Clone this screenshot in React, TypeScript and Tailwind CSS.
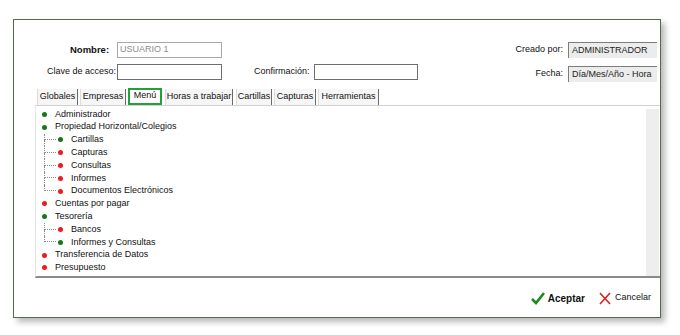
type Node = { t: string; ok: boolean; children?: Node[] };

const tree: Node[] = [
  { t: 'Administrador', ok: true },
  {
    t: 'Propiedad Horizontal/Colegios',
    ok: true,
    children: [
      { t: 'Cartillas', ok: true },
      { t: 'Capturas', ok: false },
      { t: 'Consultas', ok: false },
      { t: 'Informes', ok: false },
      { t: 'Documentos Electrónicos', ok: false },
    ],
  },
  { t: 'Cuentas por pagar', ok: false },
  {
    t: 'Tesorería',
    ok: true,
    children: [
      { t: 'Bancos', ok: false },
      { t: 'Informes y Consultas', ok: true },
    ],
  },
  { t: 'Transferencia de Datos', ok: false },
  { t: 'Presupuesto', ok: false },
];

const tabs = [
  { t: 'Globales', w: 'w-[41px]', mr: 'mr-[2px]' },
  { t: 'Empresas', w: 'w-[46px]', mr: 'mr-[2px]' },
  { t: 'Menú', w: 'w-[34px]', mr: 'mr-[3px]', active: true },
  { t: 'Horas a trabajar', w: 'w-[68px]', mr: 'mr-[3px]' },
  { t: 'Cartillas', w: 'w-[36px]', mr: 'mr-[2px]' },
  { t: 'Capturas', w: 'w-[42px]', mr: 'mr-[2px]' },
  { t: 'Herramientas', w: 'w-[61px]', mr: 'mr-0' },
];

function Dot({ ok }: { ok: boolean }) {
  return <span className={`w-[5px] h-[5px] rounded-full shrink-0 ${ok ? 'bg-[#17761c]' : 'bg-[#ee1c1c]'}`} />;
}

function Row({ node }: { node: Node }) {
  return (
    <>
      <div className="flex items-center h-[12.8px] pl-[6px]">
        <Dot ok={node.ok} />
        <span className="ml-[8px] whitespace-nowrap">{node.t}</span>
      </div>
      {node.children?.map((c, i) => {
        const last = i === node.children!.length - 1;
        return (
          <div key={c.t} className="flex items-center h-[12.8px] pl-[8px]">
            <div className="flex flex-col w-[12px] h-full shrink-0">
              <div className="h-1/2 border-l border-b border-dotted border-[#8a8a8a]" />
              <div className={`h-1/2 ${last ? '' : 'border-l border-dotted border-[#8a8a8a]'}`} />
            </div>
            <span className="ml-[2px] flex">
              <Dot ok={c.ok} />
            </span>
            <span className="ml-[8px] whitespace-nowrap">{c.t}</span>
          </div>
        );
      })}
    </>
  );
}

export default function App() {
  return (
    <div
      className="w-[680px] h-[335px] bg-white pt-[19px] pl-[13px] text-[9px] text-[#111]"
      style={{ fontFamily: '"Liberation Sans", Arial, sans-serif' }}
    >
      <div className="w-[648px] h-[299px] border border-[#566b4d] bg-white shadow-[4px_4px_6px_rgba(0,0,0,0.28)] flex flex-col">
        {/* Nombre / Creado por */}
        <div className="flex items-center h-[16px] mt-[22px] pl-[56px] pr-[3px]">
          <span className="font-bold text-[9.5px]">Nombre:</span>
          <div className="ml-[8px] w-[105px] h-[16px] border border-[#a9a9a9] text-[#8c8c8c] flex items-center pl-[2px]">
            USUARIO 1
          </div>
          <div className="flex-1" />
          <span>Creado por:</span>
          <div className="ml-[5px] w-[89px] h-[16px] bg-[#ececec] border-t border-l border-[#7c7c7c] flex items-center pl-[3px] text-[#222]">
            ADMINISTRADOR
          </div>
        </div>

        {/* Clave / Confirmación / Fecha */}
        <div className="flex items-start h-[18px] mt-[6px] pl-[33px] pr-[3px]">
          <span className="h-[16px] flex items-center">Clave de acceso:</span>
          <div className="ml-[1px] w-[105px] h-[16px] border border-[#6e6e6e]" />
          <span className="ml-[32px] h-[16px] flex items-center">Confirmación:</span>
          <div className="ml-[4px] w-[104px] h-[16px] border border-[#6e6e6e]" />
          <div className="flex-1" />
          <span className="mt-[2px] h-[16px] flex items-center">Fecha:</span>
          <div className="ml-[5px] mt-[2px] w-[89px] h-[16px] bg-[#ececec] border-t border-l border-[#7c7c7c] flex items-center pl-[3px] text-[#222]">
            Día/Mes/Año - Hora
          </div>
        </div>

        {/* Tabs */}
        <div className="flex items-end h-[17px] mt-[6px] ml-[23px]">
          {tabs.map((tb) =>
            tb.active ? (
              <div
                key={tb.t}
                className={`${tb.w} ${tb.mr} h-[17px] border-2 border-[#22a03a] bg-white flex items-center justify-center pb-[2px]`}
              >
                {tb.t}
              </div>
            ) : (
              <div
                key={tb.t}
                className={`${tb.w} ${tb.mr} h-[16px] bg-[#f6f6f6] border-l border-[#dcdcdc] border-r border-r-[#6a6a6a] flex items-center justify-center`}
              >
                {tb.t}
              </div>
            ),
          )}
        </div>

        {/* Panel */}
        <div className="flex ml-[21px] h-[173px] border-t border-[#d2d2d2] border-l border-l-[#e6e6e6] border-b-2 border-b-[#8a8a8a]">
          <div className="flex-1 flex flex-col pt-[2px]">
            {tree.map((n) => (
              <Row key={n.t} node={n} />
            ))}
          </div>
          <div className="w-[13px] mt-[3px] mr-[1px] bg-[#eeeeee]" />
        </div>

        {/* Buttons */}
        <div className="flex items-center justify-end h-[14px] mt-[13px] pr-[9px]">
          <svg width="14" height="13" viewBox="0 0 14 13">
            <path d="M1 7 L5 11 L13 1" fill="none" stroke="#1b8a1f" strokeWidth="2.6" strokeLinejoin="miter" />
          </svg>
          <span className="ml-[3px] font-bold text-[10px]">Aceptar</span>
          <svg className="ml-[14px]" width="12" height="13" viewBox="0 0 12 13">
            <path d="M1 1 L11 12 M11 1 L1 12" stroke="#e21d1d" strokeWidth="1.6" />
          </svg>
          <span className="ml-[4px]">Cancelar</span>
        </div>
      </div>
    </div>
  );
}
